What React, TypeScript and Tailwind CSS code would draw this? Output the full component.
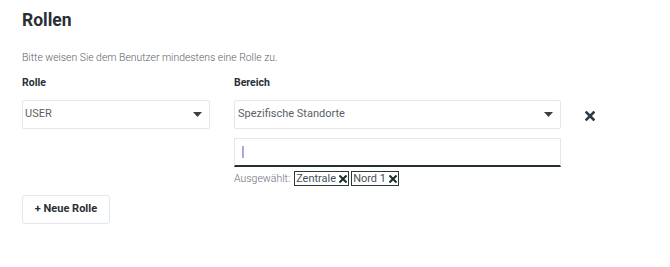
import { useState } from 'react';

function Caret() {
  return (
    <svg width="9" height="5" viewBox="0 0 9 5" className="shrink-0">
      <path d="M0 0 L9 0 L4.5 5 Z" fill="#3a3f45" />
    </svg>
  );
}

function Times({ size = 9, color = '#1f2d2d' }: { size?: number; color?: string }) {
  return (
    <svg width={size} height={size} viewBox="0 0 10 10" className="shrink-0">
      <path d="M1.5 1.5 L8.5 8.5 M8.5 1.5 L1.5 8.5" stroke={color} strokeWidth="2.6" strokeLinecap="square" />
    </svg>
  );
}

export default function App() {
  const [selected] = useState(['Zentrale', 'Nord 1']);

  return (
    <div className="w-[670px] h-[267px] bg-white px-[22px] pt-[8px] font-['Roboto',sans-serif]">
      <h1 className="text-[17.5px] font-bold text-[#2a2f36] leading-[24px]">Rollen</h1>
      <p className="mt-[19px] text-[10.4px] font-light text-[#5a5f66] leading-[14px]">
        Bitte weisen Sie dem Benutzer mindestens eine Rolle zu.
      </p>

      <div className="mt-[11px] flex items-start">
        {/* Rolle */}
        <div className="w-[188px]">
          <div className="text-[10.5px] font-bold text-[#2a2f36] leading-[14px] h-[14px]">Rolle</div>
          <div className="mt-[10px] h-[29px] border border-[#e3e6ea] rounded-[2px] flex items-center justify-between pl-[2px] pr-[7px]">
            <span className="text-[11px] text-[#5a5f66]">USER</span>
            <Caret />
          </div>
        </div>

        {/* Bereich */}
        <div className="ml-[24px] w-[327px]">
          <div className="text-[10.5px] font-bold text-[#2a2f36] leading-[14px] h-[14px]">Bereich</div>
          <div className="mt-[10px] h-[29px] border border-[#e3e6ea] rounded-[2px] flex items-center justify-between pl-[3px] pr-[7px]">
            <span className="text-[11px] text-[#5a5f66]">Spezifische Standorte</span>
            <Caret />
          </div>
          <div className="mt-[9px] h-[29px] border border-[#e3e6ea] border-b-2 border-b-[#24302f] flex items-center pl-[7px]">
            <span className="w-[2px] h-[12px] bg-[#a9a8dd]" />
          </div>
          <div className="mt-[4px] flex items-center text-[10.5px] text-[#6b6f75] leading-[14px]">
            <span className="mr-[4px] font-light">Ausgewählt:</span>
            {selected.map((s) => (
              <span
                key={s}
                className="mr-[2px] flex items-center gap-[3px] border border-[#2a3a36] px-[1px] h-[15px] text-[#4a4f55] text-[11px]"
              >
                {s}
                <Times size={8} />
              </span>
            ))}
          </div>
        </div>

        <div className="ml-[24px] mt-[35px]">
          <Times size={10} color="#2e3a46" />
        </div>
      </div>

      <button className="mt-[9px] h-[29px] w-[88px] border border-[#e3e6ea] rounded-[3px] text-[11px] font-bold text-[#2a2f36] flex items-center justify-center">
        + Neue Rolle
      </button>
    </div>
  );
}
